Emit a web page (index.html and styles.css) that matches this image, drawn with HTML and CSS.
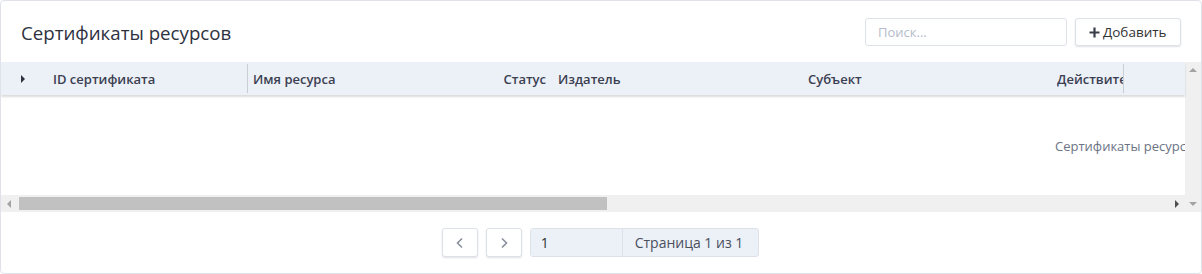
FILE: index.html
```html
<!DOCTYPE html>
<html lang="ru">
<head>
  <meta charset="UTF-8">
  <title>Сертификаты ресурсов</title>
  <link rel="stylesheet" href="styles.css">
</head>
<body>
  <div class="panel">
    <div class="toolbar">
      <h1>Сертификаты ресурсов</h1>
      <input class="search" type="text" placeholder="Поиск...">
      <button class="btn add">
        <svg class="plus" width="11" height="11" viewBox="0 0 11 11"><path d="M5.5 0.5v10M0.5 5.5h10" stroke="#3a3d4a" stroke-width="2.2" fill="none"/></svg>
        Добавить
      </button>
    </div>

    <div class="grid">
      <div class="grid-main">
        <div class="grid-head">
          <div class="cell expander"><span class="caret"></span></div>
          <div class="cell col-id">ID сертификата</div>
          <div class="cell col-name">Имя ресурса</div>
          <div class="cell col-status">Статус</div>
          <div class="cell col-issuer">Издатель</div>
          <div class="cell col-subject">Субъект</div>
          <div class="cell col-valid">Действителен до</div>
        </div>
        <div class="grid-body">
          <div class="empty">Сертификаты ресурсов отсутствуют</div>
        </div>
        <div class="hscroll">
          <span class="arrow left"></span>
          <div class="thumb"></div>
          <span class="arrow right"></span>
        </div>
      </div>
      <div class="vscroll">
        <span class="arrow up"></span>
        <span class="arrow down"></span>
      </div>
    </div>

    <div class="pager">
      <button class="btn nav"><svg width="10" height="12" viewBox="0 0 10 12"><path d="M7 1.5L2.5 6L7 10.5" stroke="#8a8f9c" stroke-width="1.6" fill="none"/></svg></button>
      <button class="btn nav"><svg width="10" height="12" viewBox="0 0 10 12"><path d="M3 1.5L7.5 6L3 10.5" stroke="#8a8f9c" stroke-width="1.6" fill="none"/></svg></button>
      <div class="page-box">
        <input class="page-input" type="text" value="1">
        <span class="page-label">Страница 1 из 1</span>
      </div>
    </div>
  </div>
</body>
</html>
```

FILE: styles.css
```css
body {
  margin: 0;
  font-family: 'Open Sans', 'Noto Sans', sans-serif;
  background: #fff;
  color: #333;
}
.panel {
  height: 272px;
  border: 1px solid #dfe2ea;
  border-radius: 4px;
  background: #fff;
  display: flex;
  flex-direction: column;
  overflow: hidden;
}
.toolbar {
  display: flex;
  align-items: center;
  height: 61px;
  padding: 0 20px 0 20px;
}
.toolbar h1 {
  flex: 1;
  margin: 0;
  font-size: 18.7px;
  font-weight: 400;
  color: #2e3140;
  padding-top: 1px;
}
.search {
  width: 202px;
  height: 28px;
  box-sizing: border-box;
  border: 1px solid #dde1ea;
  border-radius: 3px;
  padding: 0 12px;
  font-family: inherit;
  font-size: 13px;
  margin-right: 8px;
}
.search::placeholder {
  color: #b5bccb;
}
.btn {
  font-family: inherit;
  background: #fff;
  border: 1px solid #dde1ea;
  border-radius: 3px;
  box-shadow: 0 1px 2px rgba(0, 0, 0, 0.12);
  color: #333;
  cursor: pointer;
}
.add {
  height: 28px;
  width: 106px;
  font-size: 13.5px;
  padding: 0 0 0 13px;
  display: flex;
  align-items: center;
  gap: 3px;
}
.plus {
  margin-top: 1px;
}
.grid {
  display: flex;
  height: 150px;
}
.grid-main {
  flex: 1;
  display: flex;
  flex-direction: column;
  min-width: 0;
}
.grid-head {
  display: flex;
  height: 33px;
  background: #ecf0f7;
  box-shadow: 0 2px 2px rgba(0, 0, 0, 0.14);
  position: relative;
  z-index: 1;
  font-size: 13px;
  font-weight: 600;
  color: #3a3f51;
  white-space: nowrap;
  overflow: hidden;
}
.cell {
  display: flex;
  align-items: center;
  box-sizing: border-box;
  flex-shrink: 0;
  overflow: hidden;
}
.expander {
  width: 39px;
  padding-left: 20px;
}
.caret {
  width: 0;
  height: 0;
  border-top: 4px solid transparent;
  border-bottom: 4px solid transparent;
  border-left: 4px solid #2e3140;
}
.col-id {
  width: 208px;
  padding-left: 13px;
  border-right: 1px solid #c9cdd6;
  margin: 2px 0;
}
.col-name {
  width: 242px;
  padding-left: 5px;
}
.col-status {
  width: 56px;
  justify-content: flex-end;
}
.col-issuer {
  width: 262px;
  padding-left: 12px;
}
.col-subject {
  width: 249px;
}
.col-valid {
  width: 67px;
  border-right: 1px solid #c9cdd6;
  margin: 2px 0;
}
.grid-body {
  flex: 1;
  display: flex;
  align-items: center;
  overflow: hidden;
  white-space: nowrap;
}
.empty {
  margin-left: 1054px;
  margin-top: 2px;
  font-size: 13px;
  color: #6b7385;
}
.hscroll {
  height: 17px;
  background: #f0f0f0;
  display: flex;
  align-items: center;
}
.thumb {
  width: 588px;
  height: 13px;
  background: #c1c1c1;
  margin-left: 8px;
}
.hscroll .right {
  margin-left: auto;
  margin-right: 6px;
}
.arrow {
  width: 0;
  height: 0;
  display: block;
}
.arrow.left {
  margin-left: 6px;
  border-top: 4px solid transparent;
  border-bottom: 4px solid transparent;
  border-right: 4px solid #a3a3a3;
}
.arrow.right {
  border-top: 4px solid transparent;
  border-bottom: 4px solid transparent;
  border-left: 4px solid #505050;
}
.vscroll {
  width: 16px;
  background: #f0f0f0;
  display: flex;
  flex-direction: column;
  align-items: center;
  justify-content: space-between;
  padding: 6px 0;
  box-sizing: border-box;
}
.arrow.up {
  border-left: 4px solid transparent;
  border-right: 4px solid transparent;
  border-bottom: 4px solid #a3a3a3;
}
.arrow.down {
  border-left: 4px solid transparent;
  border-right: 4px solid transparent;
  border-top: 4px solid #a3a3a3;
}
.pager {
  flex: 1;
  display: flex;
  justify-content: center;
  align-items: center;
  gap: 8px;
  padding-right: 1px;
}
.nav {
  width: 36px;
  height: 29px;
  padding: 0;
  display: flex;
  align-items: center;
  justify-content: center;
}
.page-box {
  display: flex;
  height: 29px;
  border: 1px solid #dde1ea;
  border-radius: 3px;
  background: #ecf0f7;
  box-sizing: border-box;
  font-size: 14px;
}
.page-input {
  width: 92px;
  border: none;
  border-right: 1px solid #dde1ea;
  background: #ecf0f7;
  padding: 0 10px;
  font-family: inherit;
  font-size: 14px;
  color: #333;
  box-sizing: border-box;
}
.page-label {
  display: flex;
  align-items: center;
  padding: 0 15px 0 12px;
  color: #4a4f5e;
}
```
